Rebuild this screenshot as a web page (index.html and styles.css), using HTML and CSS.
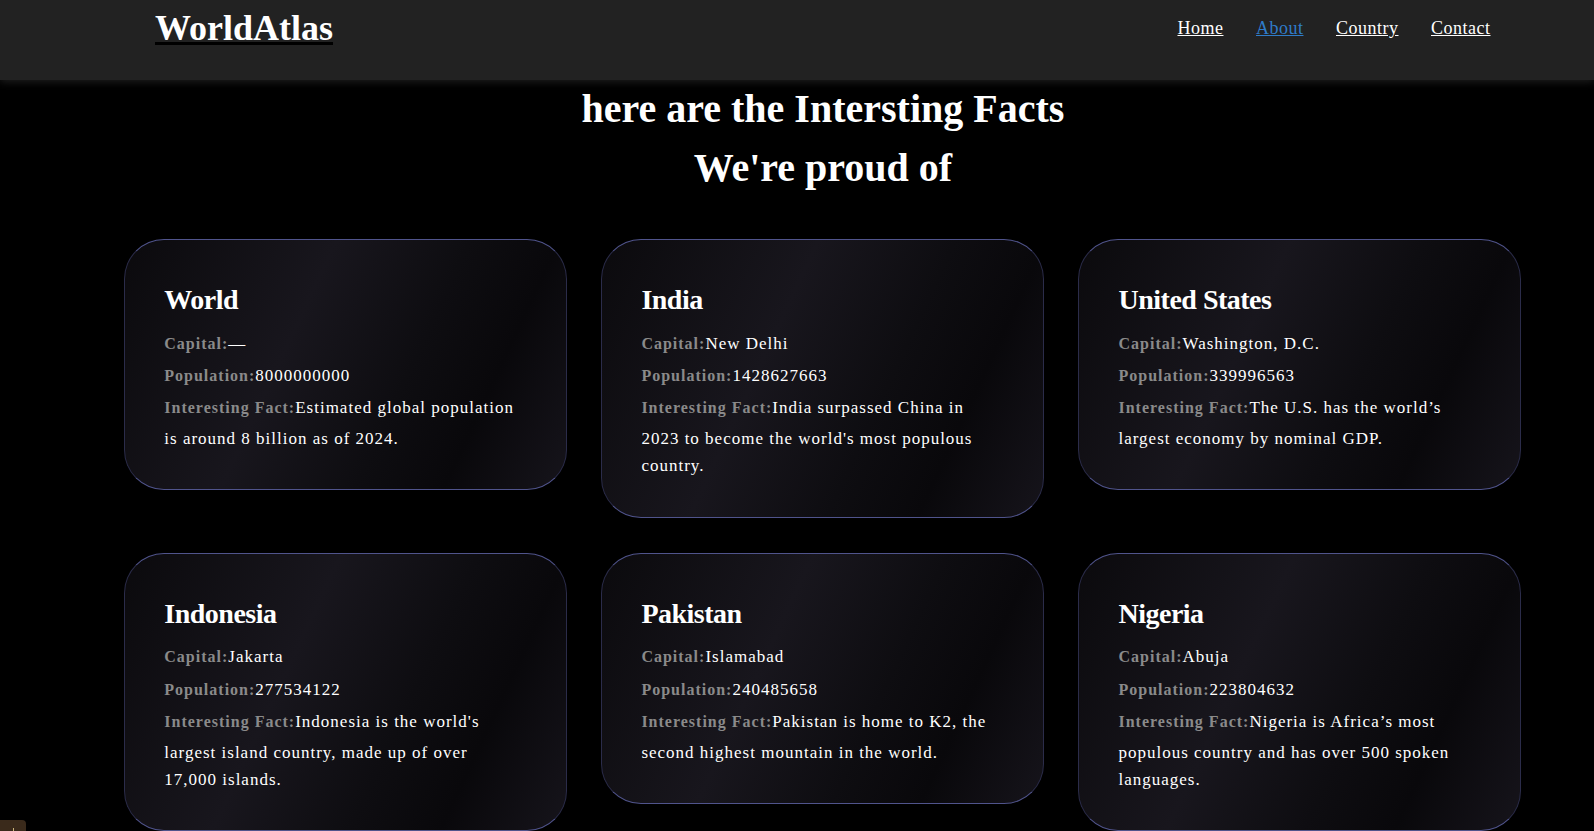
FILE: index.html
```html
<!DOCTYPE html>
<html lang="en">
<head>
<meta charset="utf-8">
<title>WorldAtlas - About</title>
<link rel="stylesheet" href="styles.css">
</head>
<body>
<header class="site-header">
  <div class="header-row">
    <a class="logo" href="#">WorldAtlas</a>
    <nav class="main-nav">
      <a class="nav-link" href="#">Home</a>
      <a class="nav-link active" href="#">About</a>
      <a class="nav-link" href="#">Country</a>
      <a class="nav-link" href="#">Contact</a>
    </nav>
  </div>
</header>

<main class="facts-section">
  <h1 class="facts-title">here are the Intersting Facts<br>We're proud of</h1>
  <div class="facts-grid">
    <div class="card">
      <h2 class="card-title">World</h2>
      <p><span class="label">Capital:</span>—</p>
      <p><span class="label">Population:</span>8000000000</p>
      <p><span class="label">Interesting Fact:</span>Estimated global population is around 8 billion as of 2024.</p>
    </div>
    <div class="card">
      <h2 class="card-title">India</h2>
      <p><span class="label">Capital:</span>New Delhi</p>
      <p><span class="label">Population:</span>1428627663</p>
      <p><span class="label">Interesting Fact:</span>India surpassed China in 2023 to become the world's most populous country.</p>
    </div>
    <div class="card">
      <h2 class="card-title">United States</h2>
      <p><span class="label">Capital:</span>Washington, D.C.</p>
      <p><span class="label">Population:</span>339996563</p>
      <p><span class="label">Interesting Fact:</span>The U.S. has the world’s largest economy by nominal GDP.</p>
    </div>
    <div class="card">
      <h2 class="card-title">Indonesia</h2>
      <p><span class="label">Capital:</span>Jakarta</p>
      <p><span class="label">Population:</span>277534122</p>
      <p><span class="label">Interesting Fact:</span>Indonesia is the world's largest island country, made up of over 17,000 islands.</p>
    </div>
    <div class="card">
      <h2 class="card-title">Pakistan</h2>
      <p><span class="label">Capital:</span>Islamabad</p>
      <p><span class="label">Population:</span>240485658</p>
      <p><span class="label">Interesting Fact:</span>Pakistan is home to K2, the second highest mountain in the world.</p>
    </div>
    <div class="card">
      <h2 class="card-title">Nigeria</h2>
      <p><span class="label">Capital:</span>Abuja</p>
      <p><span class="label">Population:</span>223804632</p>
      <p><span class="label">Interesting Fact:</span>Nigeria is Africa’s most populous country and has over 500 spoken languages.</p>
    </div>
  </div>
</main>

<div class="corner-badge"><span class="corner-mark"></span></div>
</body>
</html>
```

FILE: styles.css
```css
* {
  box-sizing: border-box;
}

html, body {
  margin: 0;
  padding: 0;
}

body {
  background: #000;
  color: #fff;
  font-family: "Liberation Serif", "Times New Roman", serif;
}

.site-header {
  height: 80px;
  background: #222222;
  box-shadow: 0 2px 8px rgba(60, 60, 60, 0.5);
  position: relative;
  z-index: 1;
}

.header-row {
  height: 55px;
  display: flex;
  align-items: center;
  justify-content: space-between;
  padding: 0 103.5px 0 155px;
}

.logo {
  font-size: 36px;
  font-weight: bold;
  line-height: 40px;
  margin-top: 1px;
  color: #fff;
  text-decoration: underline;
  text-decoration-color: #000;
  text-decoration-thickness: 2.5px;
}

.main-nav {
  display: flex;
  gap: 32.5px;
  margin-top: 2px;
}

.nav-link {
  font-size: 18px;
  line-height: 21px;
  letter-spacing: 0.5px;
  color: #fff;
  text-decoration: underline;
}

.nav-link.active {
  color: #2f7cc9;
}

.facts-section {
  padding: 0 72.5px 60px 124.3px;
}

.facts-title {
  margin: -1.5px 0 42px;
  font-size: 40px;
  line-height: 59.3px;
  font-weight: bold;
  text-align: center;
  color: #fff;
}

.facts-grid {
  display: grid;
  grid-template-columns: repeat(3, 442.6px);
  column-gap: 34.5px;
  row-gap: 35px;
  align-items: start;
}

.card {
  border-radius: 40px;
  border: 1px solid;
  border-color: #50548c #2b2c4a #50548c #2b2c4a;
  background: linear-gradient(115deg, #0b0a0d 0%, #18161d 38%, #0e0d11 62%, #09080b 78%, #16141b 100%);
  padding: 44px 41px 35.5px 39px;
}

.card-title {
  margin: 0 0 13.6px;
  font-size: 28px;
  line-height: 32px;
  font-weight: bold;
  letter-spacing: -0.5px;
  color: #fff;
}

.card p {
  margin: 0 0 1.5px;
  font-size: 17px;
  line-height: 27.3px;
  letter-spacing: 1px;
  color: #fff;
}

.label {
  display: inline-block;
  padding-bottom: 3.5px;
  font-size: 16px;
  line-height: 27.3px;
  font-weight: bold;
  color: #8a8a8a;
}

.corner-badge {
  position: fixed;
  left: 0;
  bottom: 0;
  width: 26px;
  height: 11px;
  background: #3a2a1b;
  border-top-right-radius: 4px;
}

.corner-mark {
  position: absolute;
  left: 13px;
  bottom: 0;
  width: 1px;
  height: 3px;
  background: #c9b27a;
}
```
